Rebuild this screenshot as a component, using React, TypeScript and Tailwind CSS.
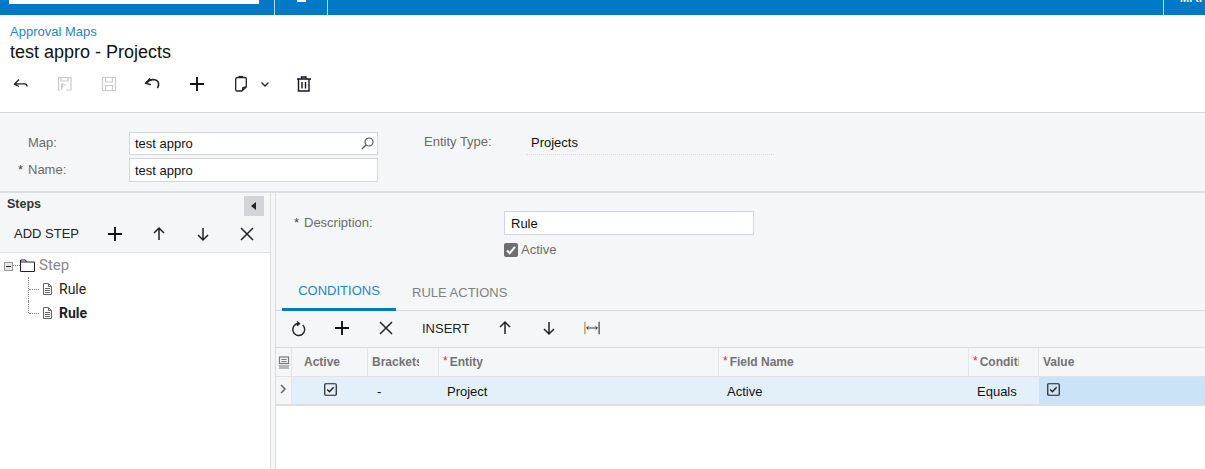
import React from "react";

type IconProps = { className?: string; children: React.ReactNode; size?: number; vb?: number };
function Ico({ className = "", children, size = 20, vb = 20 }: IconProps) {
  return (
    <svg width={size} height={size} viewBox={`0 0 ${vb} ${vb}`} fill="none" stroke="currentColor" strokeWidth={1.5} className={`shrink-0 ${className}`}>
      {children}
    </svg>
  );
}
const Plus = () => <Ico><path d="M10 3v14M3 10h14" strokeWidth={1.9} /></Ico>;
const Up = () => <Ico><path d="M10 16V4.5M5 9l5-5 5 5" /></Ico>;
const Down = () => <Ico><path d="M10 4v11.5M5 11l5 5 5-5" /></Ico>;
const X = () => <Ico><path d="M4 4l12 12M16 4L4 16" /></Ico>;
const Check = () => (
  <svg width="13" height="13" viewBox="0 0 13 13" fill="none" className="shrink-0">
    <rect x="0.75" y="0.75" width="11.5" height="11.5" rx="1" stroke="#222" strokeWidth="1.2" />
    <path d="M3.2 6.6l2.2 2.2 4.2-4.6" stroke="#222" strokeWidth="1.4" />
  </svg>
);
const Doc = () => (
  <svg width="11" height="12" viewBox="0 0 11 12" fill="none" stroke="#666" className="shrink-0">
    <path d="M1.5.5h5l3 3v8h-8zM6.5.5v3h3" />
    <path d="M3 5.5h5M3 7.5h5M3 9.5h5" />
  </svg>
);

function Head({ w, req, label, cls = "", clip = "" }: { w: string; req?: boolean; label: string; cls?: string; clip?: string }) {
  return (
    <div className={`${w} shrink-0 h-full border-r border-[#e3e5e8] flex items-center whitespace-nowrap text-[12px] font-bold text-[#737373] ${cls}`}>
      {req && <span className="text-[#e0262c] font-normal mr-[2px] text-[12px] -mt-[3px]">*</span>}
      <span className={`block overflow-hidden ${clip}`}>{label}</span>
    </div>
  );
}

export default function App() {
  return (
    <div className="w-[1205px] h-[469px] overflow-hidden bg-white text-[#111] text-[13px] flex flex-col font-['Liberation_Sans',Arial,sans-serif]">
      {/* top bar */}
      <div className="h-[15px] shrink-0 bg-[#007ac7] flex items-start">
        <div className="ml-[9px] w-[250px] h-[4px] bg-white" />
        <div className="ml-[15px] w-[54px] h-full border-x border-[#b8d9ef] flex justify-center">
          <div className="w-[9px] h-[2px] bg-white" />
        </div>
        <div className="ml-auto w-[42px] h-full border-l border-[#b8d9ef] overflow-hidden pl-[16px]">
          <div className="text-white text-[11px] leading-[11px] -mt-[7px] font-bold">Mi ti</div>
        </div>
      </div>

      {/* title + toolbar */}
      <div className="h-[98px] shrink-0 border-b border-[#d2d4d7] flex flex-col">
        <div className="pl-[10px] pt-[9px] text-[13px] leading-[15px] text-[#1e86c9]">Approval Maps</div>
        <div className="pl-[10px] text-[18px] leading-[21px] mt-[3px] text-[#111]">test appro - Projects</div>
        <div className="flex items-center h-[24px] mt-[9px] text-[#222]">
          <div className="w-[44px] pl-[11px]">
            <Ico><path d="M8 5.5L3.5 10 8 12.5M3.5 9.8h10c1.6 0 2.6 1 2.6 2.8" strokeWidth={1.3} /></Ico>
          </div>
          <div className="w-[44px] pl-[11px] text-[#c9c9c9]">
            <Ico><path d="M5 16H3.5V3.5h12.5V16h-5M6 3.5v3.5h7V3.5M11 11H6.500M8 9l-2 2 2 2M6.500 11v5" strokeWidth={1.2} /></Ico>
          </div>
          <div className="w-[44px] pl-[11px] text-[#c9c9c9]">
            <Ico><path d="M3.500 3.500h13V16.500h-13zM6.500 3.500V8h7V3.500M6.500 16.500V11.500h7v5" strokeWidth={1.2} /></Ico>
          </div>
          <div className="w-[44px] pl-[11px]">
            <Ico><path d="M7 4.500L2.800 9.200l5 1.500M3.500 9c2-2.500 5-3.700 8-3.200 3 .6 4.500 3 4 5.700-.2 1-.6 1.800-1.300 2.500" strokeWidth={1.6} /></Ico>
          </div>
          <div className="w-[44px] pl-[11px] text-[#111]"><Plus /></div>
          <div className="w-[25px] pl-[11px]">
            <Ico><path d="M7 3.500h7c.8 0 1.300.5 1.300 1.300V13l-4.500 4H6c-.8 0-1.300-.5-1.300-1.300V5.500M7 3.500c-1.300 0-2.300 1-2.300 2M15.300 13l-3.300.5-1 3.500" strokeWidth={1.3} /><path d="M7.500 2.500h4.500" strokeWidth={1.3} /></Ico>
          </div>
          <div className="w-[40px] pl-[14px]">
            <Ico size={12} vb={12}><path d="M2.500 4.500L6 8l3.500-3.500" strokeWidth={1.3} /></Ico>
          </div>
          <div className="pl-[9px] text-[#1a1024]">
            <Ico><path d="M4.500 5.500V17h10.500V5.500M3 5h14M7.500 5V3h4.500v2M8 8v6.500M11.500 8v6.500" strokeWidth={1.4} /></Ico>
          </div>
        </div>
      </div>

      {/* form */}
      <div className="h-[80px] shrink-0 bg-[#f5f6f8] border-b-2 border-[#dcdde0] flex text-[13px]">
        <div className="w-[129px] pt-[22px] shrink-0 text-[#6b6b6b] text-[13px]">
          <div className="h-[27px] pl-[28px] leading-[16px]">Map:</div>
          <div className="pl-[18px] leading-[16px] flex"><span className="w-[10px] text-[#444]">*</span>Name:</div>
        </div>
        <div className="w-[249px] shrink-0 pt-[19px] flex flex-col gap-[3px]">
          <div className="h-[23px] bg-white border border-[#d4d6d9] pl-[5px] flex items-center justify-between pr-[2px]">
            test appro
            <svg width="15" height="15" viewBox="0 0 15 15" fill="none" stroke="#555" strokeWidth="1.2"><circle cx="9" cy="6" r="4" /><path d="M6 9l-4 4" /></svg>
          </div>
          <div className="h-[24px] bg-white border border-[#d4d6d9] pl-[5px] pt-[1px] flex items-center">test appro</div>
        </div>
        <div className="pl-[46px] pt-[21px] w-[148px] shrink-0 text-[#6b6b6b] text-[13px] leading-[16px]">Entity Type:</div>
        <div className="w-[248px] h-[24px] mt-[18px] border-b border-dotted border-[#d8d8d8] pl-[5px] flex items-center">Projects</div>
      </div>

      {/* body */}
      <div className="flex-1 flex min-h-0">
        {/* left */}
        <div className="w-[271px] shrink-0 border-r border-[#dcdde0] flex flex-col">
          <div className="h-[60px] shrink-0 bg-[#f5f6f8] border-b border-[#e0e1e4] flex flex-col">
            <div className="flex justify-between pl-[7px] pr-[6px] pt-[3px] h-[26px]">
              <span className="font-bold text-[#333] text-[12.5px] leading-[15px] mt-[1px]">Steps</span>
              <div className="w-[20px] h-[20px] bg-[#d3d4d7] flex items-center justify-center">
                <svg width="6" height="8" viewBox="0 0 6 8" fill="#222"><path d="M5 0v8L0 4z" /></svg>
              </div>
            </div>
            <div className="flex items-center pl-[14px] h-[30px] text-[#222]">
              <span className="w-[91px] text-[13px]">ADD STEP</span>
              <div className="w-[44px] text-[#111]"><Plus /></div>
              <div className="w-[44px]"><Up /></div>
              <div className="w-[44px]"><Down /></div>
              <div className="w-[20px]"><X /></div>
            </div>
          </div>
          <div className="flex-1 bg-white pt-[3px] font-['Roboto',sans-serif]">
            <div className="flex items-center h-[18px] pl-[4px]">
              <div className="w-[9px] h-[9px] mt-[3px] border border-[#999] bg-[#e8e8e8] flex items-center justify-center">
                <div className="w-[5px] h-px bg-[#222]" />
              </div>
              <div className="w-[7px] border-t border-dotted border-[#888]" />
              <svg width="15" height="13" viewBox="0 0 15 13" fill="none" stroke="#2a1a2a" strokeWidth="1"><path d="M.5 12.500V1h5l1 2h8v9.500z M.5 3h6" /></svg>
              <span className="ml-[4px] text-[15px] text-[#888]">Step</span>
            </div>
            <div className="flex items-center h-[24px] pl-[28px] mt-[3px]">
              <div className="w-[1px] h-full border-l border-dotted border-[#888]" />
              <div className="w-[10px] border-t border-dotted border-[#888]" />
              <span className="ml-[3px]"><Doc /></span>
              <span className="ml-[6px] text-[14px] text-[#222]">Rule</span>
            </div>
            <div className="flex items-center h-[24px] pl-[28px]">
              <div className="w-[1px] h-[12px] -mt-[12px] border-l border-dotted border-[#888]" />
              <div className="w-[10px] border-t border-dotted border-[#888]" />
              <span className="ml-[3px]"><Doc /></span>
              <span className="ml-[6px] text-[14px] font-bold text-[#222]">Rule</span>
            </div>
          </div>
        </div>
        {/* splitter */}
        <div className="w-[5px] shrink-0 bg-[#f5f6f8] border-r border-[#dcdde0]" />
        {/* right */}
        <div className="flex-1 flex flex-col min-w-0">
          <div className="bg-[#f5f6f8] shrink-0">
            <div className="h-[79px] flex">
              <div className="w-[228px] pl-[18px] pt-[22px] text-[13px] text-[#6b6b6b] leading-[16px] flex shrink-0"><span className="w-[10px] text-[#444]">*</span>Description:</div>
              <div className="pt-[18px]">
                <div className="w-[250px] h-[24px] bg-white border border-[#d4d6d9] pl-[6px] pt-[1px] flex items-center">Rule</div>
                <div className="flex items-center mt-[7px] text-[#6b6b6b] h-[16px]">
                  <div className="w-[14px] h-[14px] rounded-[2px] bg-[#6e6e6e] flex items-center justify-center">
                    <svg width="10" height="10" viewBox="0 0 10 10" fill="none" stroke="#fff" strokeWidth="2"><path d="M1 5.500l2.700 2.700L9 1.800" /></svg>
                  </div>
                  <span className="ml-[3px]">Active</span>
                </div>
              </div>
            </div>
            <div className="h-[39px] border-b border-[#d8dadd] flex pl-[6px] text-[13px]">
              <div className="w-[114px] h-[39px] border-b-[3px] border-[#007ac7] text-[#1e86c9] flex items-center justify-center pt-[1px]">CONDITIONS</div>
              <div className="ml-[16px] text-[#808080] flex items-center pt-[3px]">RULE ACTIONS</div>
            </div>
            <div className="h-[37px] flex items-center pl-[13px] pb-[2px] text-[#222] border-b border-[#d8dadd]">
              <div className="w-[43px]">
                <Ico><path d="M8 3.500l2.500 2.300-2.500 2M10 5.500a6 6 0 1 0 3.700 1.500" strokeWidth={1.4} /></Ico>
              </div>
              <div className="w-[44px] text-[#111]"><Plus /></div>
              <div className="w-[36px]"><X /></div>
              <span className="w-[74px] ml-[10px] text-[13px] mt-[1px]">INSERT</span>
              <div className="w-[44px] -ml-[1px]"><Up /></div>
              <div className="w-[44px]"><Down /></div>
              <svg width="16" height="16" viewBox="0 0 18 16" fill="none" className="ml-[1px]">
                <path d="M1 1v14" stroke="#c98a2e" strokeWidth="1.400" />
                <path d="M17 1v14" stroke="#444" strokeWidth="1.400" />
                <path d="M3 8h12M5 6L3 8l2 2M13 6l2 2-2 2" stroke="#222" />
              </svg>
            </div>
          </div>
          <div className="h-[29px] shrink-0 bg-[#f5f6f8] border-b border-[#e0e2e5] flex">
            <div className="w-[16px] shrink-0 h-full border-r border-[#e3e5e8] flex items-center justify-center pl-[1px]">
              <svg width="12" height="13" viewBox="0 0 12 13" fill="none" stroke="#777" strokeWidth="1.200"><rect x="1.500" y="1" width="9" height="6.500" /><path d="M1 10h10M1 12h10M3.500 3.500h5M3.500 5.500h5" /></svg>
            </div>
            <Head w="w-[76px]" label="Active" cls="pl-[12px]" />
            <Head w="w-[71px]" label="Brackets" cls="pl-[4px]" clip="w-[47px]" />
            <Head w="w-[280px]" label="Entity" req cls="pl-[4px]" />
            <Head w="w-[250px]" label="Field Name" req cls="pl-[4px]" />
            <Head w="w-[70px]" label="Condition" req cls="pl-[4px]" clip="w-[39px]" />
            <div className="pl-[4px] flex items-center text-[12px] font-bold text-[#737373]">Value</div>
          </div>
          <div className="h-[29px] shrink-0 border-b-2 border-[#dcdde0] flex">
            <div className="w-[16px] shrink-0 bg-[#f5f6f8] border-r border-[#e3e5e8] flex items-center justify-center pb-[3px]">
              <svg width="7" height="10" viewBox="0 0 7 10" fill="none" stroke="#666" strokeWidth="1.500"><path d="M1 1l4 4-4 4" /></svg>
            </div>
            <div className="w-[76px] shrink-0 bg-[#e3f0fa] flex justify-center items-center pb-[3px]"><Check /></div>
            <div className="w-[71px] shrink-0 bg-[#e3f0fa] flex items-center pl-[9px] pt-[2px]">-</div>
            <div className="w-[280px] shrink-0 bg-[#e3f0fa] flex items-center pl-[8px] pt-[2px]">Project</div>
            <div className="w-[250px] shrink-0 bg-[#e3f0fa] flex items-center pl-[8px] pt-[2px]">Active</div>
            <div className="w-[70px] shrink-0 bg-[#e3f0fa] flex items-center pl-[8px] pt-[2px]">Equals</div>
            <div className="flex-1 bg-[#cbe3f6] flex items-center pl-[8px] pb-[3px]"><Check /></div>
          </div>
          <div className="flex-1 bg-white" />
        </div>
      </div>
    </div>
  );
}
